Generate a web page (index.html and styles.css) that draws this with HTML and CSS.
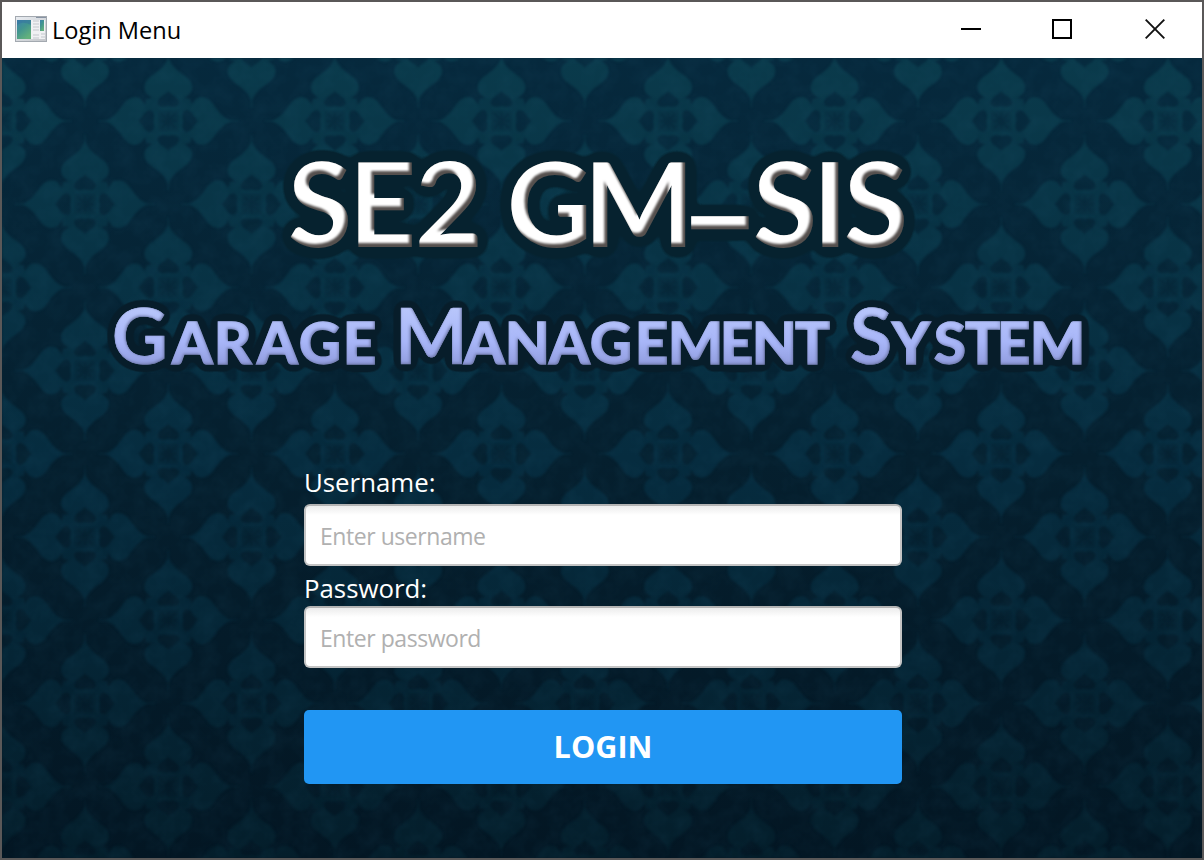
FILE: index.html
```html
<!DOCTYPE html>
<html lang="en">
<head>
<meta charset="utf-8">
<title>Login Menu</title>
<link rel="stylesheet" href="styles.css">
</head>
<body>
<div class="window">
  <header class="titlebar">
    <svg class="app-icon" width="32" height="26" viewBox="0 0 32 26">
      <defs>
        <linearGradient id="pane" x1="0" y1="0" x2=".6" y2="1"><stop offset="0" stop-color="#3d82ad"/><stop offset=".5" stop-color="#42958f"/><stop offset="1" stop-color="#63b17c"/></linearGradient>
        <linearGradient id="frame" x1="0" y1="0" x2="1" y2="1"><stop offset="0" stop-color="#e9edf2"/><stop offset="1" stop-color="#c3c6ca"/></linearGradient>
      </defs>
      <rect x=".5" y=".5" width="31" height="25" fill="url(#frame)" stroke="#a3a9b0"/>
      <path d="M21 1.5h10" stroke="#8793a3"/>
      <rect x="2" y="4" width="28" height="19" fill="#f0f1f3"/>
      <rect x="2" y="4" width="14" height="19" fill="url(#pane)"/>
      <path d="M2 9C8 5 12 7 16 9V4H2Z" fill="#3472a0" opacity=".5"/>
      <path d="M18 5h6M18 8h6M18 11h6M18 14h6M18 19h6M18 22h6M26 18h4M26 21h4" stroke="#c3c7cc"/>
      <rect x="25" y="4" width="4" height="11" fill="url(#pane)"/>
    </svg>
    <span class="window-title">Login Menu</span>
    <div class="controls">
      <svg width="20" height="20" viewBox="0 0 20 20"><path d="M0 10h20" stroke="#000" stroke-width="2"/></svg>
      <svg width="20" height="20" viewBox="0 0 20 20"><rect x="1" y="1" width="18" height="18" fill="none" stroke="#000" stroke-width="2"/></svg>
      <svg class="close" width="20" height="20" viewBox="0 0 20 20"><path d="M.7.7 19.3 19.3M19.3.7.7 19.3" stroke="#111" stroke-width="1.9"/></svg>
    </div>
  </header>
  <main class="content">
    <svg class="wallpaper" width="1200" height="800" viewBox="2 58 1200 800" aria-hidden="true">
      <defs>
        <linearGradient id="base" x1="0" y1="0" x2="0" y2="1"><stop offset="0" stop-color="#06293d"/><stop offset=".5" stop-color="#051f2e"/><stop offset="1" stop-color="#031623"/></linearGradient>
        <linearGradient id="petals" gradientUnits="userSpaceOnUse" x1="0" y1="58" x2="0" y2="858"><stop offset="0" stop-color="#0a3a4b"/><stop offset=".5" stop-color="#062c3f"/><stop offset="1" stop-color="#041e2b"/></linearGradient>
        <g id="petal">
          <path d="M0-69.500V-60" stroke="#fff" stroke-width="1"/>
          <path d="M0-64C3-54 10-50 18-44C26-38 25-29 20-26C17-23 14-24 13-19L8-8H-8L-13-19C-14-24-17-23-20-26C-25-29-26-38-18-44C-10-50-3-54 0-64Z" fill="#fff"/>
          <path d="M0-30C3-26 11-24 11-18C10-13 3-14 0-15C-3-14-10-13-11-18C-11-24-3-26 0-30Z" fill="#000" opacity=".85"/>
        </g>
        <g id="motif">
          <use href="#petal"/><use href="#petal" transform="rotate(90)"/><use href="#petal" transform="rotate(180)"/><use href="#petal" transform="rotate(270)"/>
          <path d="M-22-22L-13-24L-9-9L-24-13ZM22-22L13-24L9-9L24-13ZM-22 22L-13 24L-9 9L-24 13ZM22 22L13 24L9 9L24 13Z" fill="#ddd"/>
          <rect x="-11" y="-11" width="22" height="22" fill="#aaa" stroke="#fff"/>
          <path d="M-7-7 7 7M7-7-7 7M0-8V8M-8 0H8" stroke="#444" stroke-width="2.500"/>
        </g>
        <pattern id="damask" patternUnits="userSpaceOnUse" x="85" y="121" width="166.600" height="166.400">
          <use href="#motif" x="83.300" y="0"/><use href="#motif" x="83.300" y="166.400"/>
          <use href="#motif" x="0" y="83.200"/><use href="#motif" x="166.600" y="83.200"/>
        </pattern>
        <mask id="weave" maskUnits="userSpaceOnUse" x="2" y="58" width="1200" height="800"><rect x="2" y="58" width="1200" height="800" fill="url(#damask)" class="soft"/></mask>
        <filter id="grain" x="0" y="0" width="1" height="1"><feTurbulence type="fractalNoise" baseFrequency=".06" numOctaves="3"/><feColorMatrix values="0 0 0 0 .02  0 0 0 0 .12  0 0 0 0 .2  .9 0 0 0 -.3"/></filter>
      </defs>
      <rect x="2" y="58" width="1200" height="800" fill="url(#base)"/>
      <rect x="2" y="58" width="1200" height="800" fill="url(#petals)" mask="url(#weave)"/>
      <rect x="2" y="58" width="1200" height="800" filter="url(#grain)" opacity=".2"/>
    </svg>
    <svg class="banner" width="1200" height="352" viewBox="2 58 1200 352">
      <defs>
        <filter id="chrome" filterUnits="userSpaceOnUse" x="240" y="110" width="720" height="190" color-interpolation-filters="sRGB">
          <feGaussianBlur in="SourceAlpha" stdDeviation="7"/>
          <feComponentTransfer result="halo"><feFuncA type="linear" slope="30" intercept="-.6"/></feComponentTransfer>
          <feFlood flood-color="#06222f"/><feComposite in2="halo" operator="in" result="dark"/>
          <feOffset in="SourceAlpha" dx="-3" dy="-4"/><feGaussianBlur stdDeviation="1.100" result="shifted"/>
          <feComposite in="SourceGraphic" in2="shifted" operator="in" result="face"/>
          <feFlood flood-color="#55504e"/><feComposite in2="SourceAlpha" operator="in" result="edge"/>
          <feMerge><feMergeNode in="dark"/><feMergeNode in="edge"/><feMergeNode in="face"/></feMerge>
        </filter>
        <filter id="satin" filterUnits="userSpaceOnUse" x="80" y="280" width="1040" height="110" color-interpolation-filters="sRGB">
          <feGaussianBlur in="SourceAlpha" stdDeviation="4.500"/>
          <feComponentTransfer result="halo"><feFuncA type="linear" slope="30" intercept="-.6"/></feComponentTransfer>
          <feFlood flood-color="#071d2a"/><feComposite in2="halo" operator="in" result="dark"/>
          <feOffset in="SourceAlpha" dx="-1.500" dy="-1.500"/><feGaussianBlur stdDeviation="1.800" result="shifted"/>
          <feComposite in="SourceGraphic" in2="shifted" operator="in" result="face"/>
          <feFlood flood-color="#6d77a6"/><feComposite in2="SourceAlpha" operator="in" result="edge"/>
          <feMerge><feMergeNode in="dark"/><feMergeNode in="edge"/><feMergeNode in="face"/></feMerge>
        </filter>
        <linearGradient id="lilac" gradientUnits="userSpaceOnUse" x1="0" y1="308" x2="0" y2="364"><stop offset="0" stop-color="#b8c6fb"/><stop offset=".6" stop-color="#a8b6f8"/><stop offset="1" stop-color="#929ee0"/></linearGradient>
      </defs>
      <text class="headline" filter="url(#chrome)" y="247" x="288 349 415 459 507 584 690 753 813 844">SE2 GM<tspan class="dash" dy="-2">—</tspan><tspan dy="2">SIS</tspan></text>
      <text class="subline" filter="url(#satin)" y="364" fill="url(#lilac)" stroke="url(#lilac)"><tspan class="cap" x="112">G</tspan><tspan class="small" x="172 214 257 299 343 380">arage </tspan><tspan class="cap" x="395">M</tspan><tspan class="small" x="464 505 549 590 635 668 720 752 795 830">anagement </tspan><tspan class="cap" x="850">S</tspan><tspan class="small" x="892 934 965 997 1030">ystem</tspan></text>
    </svg>
    <form class="login">
      <label class="label" for="user">Username:</label>
      <input class="field" id="user" type="text" placeholder="Enter username">
      <label class="label label-second" for="pass">Password:</label>
      <input class="field" id="pass" type="password" placeholder="Enter password">
      <button class="submit" type="button">LOGIN</button>
    </form>
  </main>
</div>
</body>
</html>
```
FILE: styles.css
```css
* { box-sizing: border-box; }
body { margin: 0; font-family: "Open Sans", "Noto Sans", sans-serif; }
.window { width: 1204px; height: 860px; border: 2px solid #5a5858; display: flex; flex-direction: column; overflow: hidden; background: #031420; }
.titlebar { height: 56px; flex: none; background: #fff; display: flex; align-items: center; padding: 0 37px 2px 13px; }
.app-icon { flex: none; }
.window-title { margin-left: 5px; padding-top: 2px; font-size: 23.6px; line-height: 32px; color: #000; }
.controls { margin-left: auto; display: flex; gap: 71px; }
.close { margin-left: 2px; }
.content { position: relative; height: 800px; display: flex; flex-direction: column; align-items: center; }
.wallpaper { position: absolute; inset: 0; }
.soft { filter: blur(1.2px); }
.banner { position: relative; flex: none; display: block; }
.headline { font-family: Lato, sans-serif; font-weight: 700; font-size: 117px; fill: #fff; }
.dash { font-size: 75px; stroke: #fff; stroke-width: 6.5px; }
.subline { font-family: Lato, sans-serif; font-weight: 900; stroke-width: .7px; }
.cap { font-size: 77px; font-weight: 700; }
.small { font-size: 58px; text-transform: uppercase; stroke-width: 1.4px; }
.login { position: relative; width: 598px; margin-left: 2px; padding-top: 54px; display: flex; flex-direction: column; }
.label { color: #fff; font-size: 25.8px; line-height: 36px; height: 40px; }
.label-second { margin-top: 4px; height: 36px; }
.field { width: 598px; height: 62px; border: 2px solid #c4c4c4; border-top-color: #b4b4b4; border-radius: 6px; padding: 1px 14px 0; background: linear-gradient(#ececec, #fff 9px); font: 23px "Open Sans", "Noto Sans", sans-serif; letter-spacing: -.45px; outline: 0; }
.field::placeholder { color: #b0b0b0; opacity: 1; }
.submit { margin-top: 42px; height: 74px; border: 0; border-radius: 5px; background: #2196f3; color: #fff; font: 700 30.6px "Open Sans", "Noto Sans", sans-serif; padding: 0 0 2px; }
```
